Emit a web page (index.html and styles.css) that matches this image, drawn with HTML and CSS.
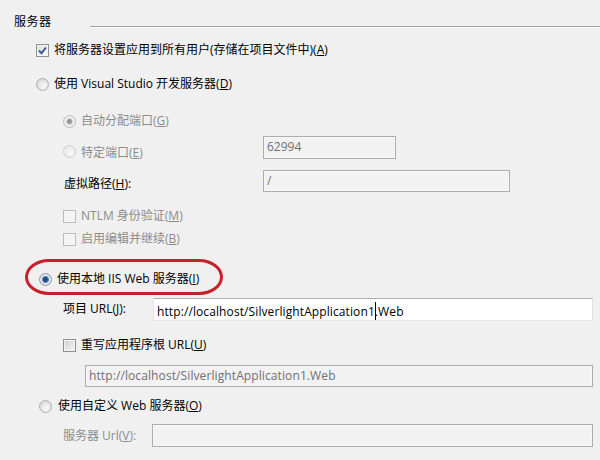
FILE: index.html
```html
<!DOCTYPE html>
<html lang="zh-CN">
<head>
<meta charset="utf-8">
<title>服务器</title>
<link rel="stylesheet" href="styles.css">
</head>
<body>
<div class="panel">
  <div class="hdr"><span class="hdr-t">服务器</span><span class="hdr-line"></span></div>

  <div class="row r-a pl-36"><span class="cb"><svg width="11" height="11" viewBox="0 0 11 11"><path d="M2 5.5 L4.5 8.2 L9 2.5" fill="none" stroke="#3d5a9a" stroke-width="2"/></svg></span><span class="lbl">将服务器设置应用到所有用户(存储在项目文件中)(<u>A</u>)</span></div>

  <div class="row r-d pl-36"><span class="rb"></span><span class="lbl">使用 Visual Studio 开发服务器(<u>D</u>)</span></div>

  <div class="row r-g pl-63"><span class="rb rb-dis-on"></span><span class="lbl dis">自动分配端口(<u>G</u>)</span></div>

  <div class="row r-e pl-63 top"><span class="rb rb-dis lift"></span><span class="lbl dis lbl-w1 lift">特定端口(<u>E</u>)</span><span class="tb tb-dis w-port">62994</span></div>

  <div class="row r-h pl-64 top"><span class="lbl lbl-w2 lift2">虚拟路径(<u>H</u>):</span><span class="tb tb-dis w-path">/</span></div>

  <div class="row r-m pl-63"><span class="cb cb-dis"></span><span class="lbl dis">NTLM 身份验证(<u>M</u>)</span></div>

  <div class="row r-b pl-63"><span class="cb cb-dis"></span><span class="lbl dis">启用编辑并继续(<u>B</u>)</span></div>

  <div class="row r-i pl-39 ring-host"><span class="rb rb-on"></span><span class="lbl">使用本地 IIS Web 服务器(<u>I</u>)</span><span class="ring"></span></div>

  <div class="row r-j pl-63 top"><span class="lbl lbl-w3 lift3">项目 URL(<u>J</u>):</span><span class="tb w-url">http://localhost/SilverlightApplication1<span class="caret"></span>.Web</span></div>

  <div class="row r-u pl-63"><span class="cb cb-off"></span><span class="lbl">重写应用程序根 URL(<u>U</u>)</span></div>

  <div class="row r-root pl-85"><span class="tb tb-dis w-root">http://localhost/SilverlightApplication1.Web</span></div>

  <div class="row r-o pl-39"><span class="rb"></span><span class="lbl gap6">使用自定义 Web 服务器(<u>O</u>)</span></div>

  <div class="row r-v pl-63 top"><span class="lbl dis lbl-w4 lift4">服务器 Url(<u>V</u>):</span><span class="tb tb-dis w-url2"></span></div>
</div>
</body>
</html>
```

FILE: styles.css
```css
html, body {
  margin: 0;
  padding: 0;
  background: #f0f0f0;
}
body {
  width: 600px;
  height: 460px;
  overflow: hidden;
  font-family: "Open Sans", "Noto Sans CJK SC", sans-serif;
  font-size: 12px;
  line-height: 16px;
  color: #000;
}
u { text-decoration: underline; text-underline-offset: 1px; }

.panel {
  display: flex;
  flex-direction: column;
}

.hdr {
  display: flex;
  align-items: center;
  height: 20px;
  margin-top: 12px;
  padding-left: 14px;
}
.hdr-t { flex: 0 0 auto; letter-spacing: 0.5px; }
.hdr-line {
  flex: 1;
  margin-left: 38px;
  margin-top: 10px;
  height: 1px;
  background: #a0a0a0;
  border-bottom: 1px solid #ffffff;
}

.row {
  display: flex;
  align-items: center;
  flex: 0 0 auto;
}
.row.top { align-items: flex-start; }

.r-a { margin-top: 8px; height: 20px; }
.r-d { margin-top: 14px; height: 20px; }
.r-g { margin-top: 17px; height: 20px; }
.r-e { margin-top: 5px; height: 23px; }
.r-h { margin-top: 11px; height: 22px; }
.r-m { margin-top: 16px; height: 16px; }
.r-b { margin-top: 7px; height: 16px; }
.r-i { margin-top: 24px; height: 16px; }
.r-j { margin-top: 11px; height: 23px; }
.r-u { margin-top: 16px; height: 16px; }
.r-root { margin-top: 12px; height: 22px; }
.r-o { margin-top: 11px; height: 16px; }
.r-v { margin-top: 10px; height: 23px; }

.pl-36 { padding-left: 36px; }
.pl-39 { padding-left: 39px; }
.pl-63 { padding-left: 63px; }
.pl-64 { padding-left: 64px; }
.pl-85 { padding-left: 85px; }

.lbl { margin-left: 5px; white-space: nowrap; }
.lbl.gap6 { margin-left: 6px; }
.lbl-w2, .lbl-w3, .lbl-w4 { margin-left: 0; }
.dis { color: #8c8c8c; }

.lift { margin-top: 9px; }
.lbl-w1 { width: 182px; flex: 0 0 182px; }
.lift2 { margin-top: 6px; }
.lbl-w2 { width: 199px; flex: 0 0 199px; }
.lift3 { margin-top: 3px; }
.lbl-w3 { width: 90px; flex: 0 0 90px; }
.lift4 { margin-top: 4px; }
.lbl-w4 { width: 89px; flex: 0 0 89px; }

/* checkboxes */
.cb {
  flex: 0 0 auto;
  box-sizing: border-box;
  width: 13px;
  height: 13px;
  border: 1px solid #8e8f8f;
  background: linear-gradient(135deg, #d7dce4 0%, #eef0f3 60%, #fbfbfb 100%);
  box-shadow: inset 0 0 0 1px #f4f4f4;
  display: flex;
  align-items: center;
  justify-content: center;
}
.cb svg { display: block; }
.cb-off {
  background: linear-gradient(135deg, #cfcfcf 0%, #e6e6e6 60%, #f6f6f6 100%);
}
.cb-dis {
  border-color: #bcbcbc;
  background: #f4f4f4;
  box-shadow: none;
}

/* radios */
.rb {
  flex: 0 0 auto;
  box-sizing: border-box;
  width: 13px;
  height: 13px;
  border-radius: 50%;
  border: 1px solid #b0b0b0;
  background: radial-gradient(circle at 60% 65%, #f8f8f8 0%, #e4e4e4 55%, #c9c9c9 100%);
}
.rb-dis {
  border-color: #cdcdcd;
  background: radial-gradient(circle at 60% 65%, #f6f6f6 0%, #ececec 60%, #dedede 100%);
}
.rb-dis-on {
  border-color: #bdbdbd;
  background: radial-gradient(circle at 50% 50%, #8a8a8a 0, #a8a8a8 2.5px, #e2e2e2 3.2px, #f2f2f2 4.5px, #dcdcdc 100%);
}
.rb-on {
  border-color: #8a95a5;
  background: radial-gradient(circle at 50% 50%, #1f3f6b 0, #2f5a93 2.2px, #6f93c4 3.2px, #e6ebf0 4px, #d2d6db 100%);
}

/* text boxes */
.tb {
  box-sizing: border-box;
  display: block;
  flex: 0 0 auto;
  padding: 2px 3px 0 3px;
  line-height: 16px;
  font-size: 12px;
  white-space: nowrap;
  overflow: hidden;
  background: #ffffff;
  border: 1px solid;
  border-color: #abadb3 #dbdfe6 #e3e9ef #e2e3ea;
  color: #000;
}
.tb-dis {
  background: #f2f2f2;
  border-color: #adadad;
  box-shadow: inset 0 0 0 1px #f7f7f7;
  color: #707070;
}
.w-port { width: 133px; height: 23px; }
.w-path { width: 247px; height: 22px; }
.w-url { width: 440px; height: 23px; padding-top: 3px; letter-spacing: 0.1px; }
.w-root { width: 508px; height: 22px; padding-top: 2px; letter-spacing: 0.1px; }
.w-url2 { width: 441px; height: 23px; }

.caret {
  display: inline-block;
  width: 0;
  height: 18px;
  border-left: 1px solid #000;
  vertical-align: -4px;
  margin-right: -1px;
}

/* red highlight */
.ring-host { position: relative; }
.ring {
  position: absolute;
  left: 25px;
  top: -12px;
  width: 198px;
  height: 36px;
  box-sizing: border-box;
  border: 3px solid #c8202c;
  border-radius: 24px / 18px;
  pointer-events: none;
}
```
